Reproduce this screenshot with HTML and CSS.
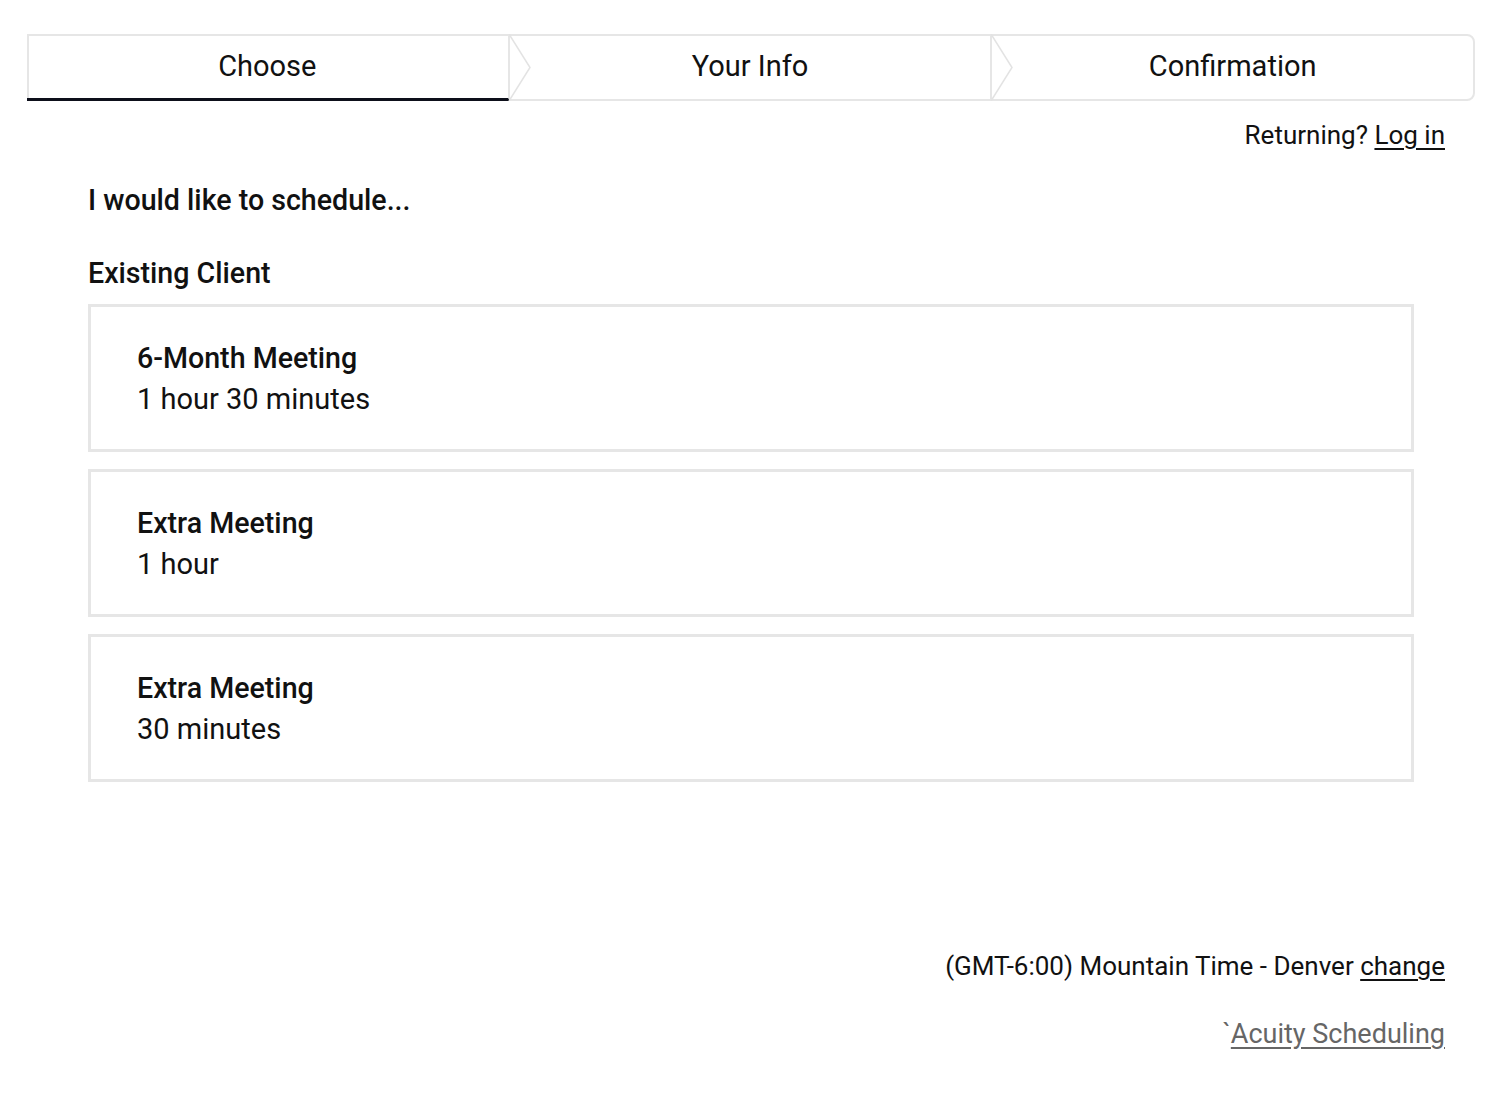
FILE: index.html
```html
<!DOCTYPE html>
<html lang="en">
<head>
<meta charset="utf-8">
<title>Schedule</title>
<link rel="stylesheet" href="styles.css">
</head>
<body>
<div class="page">
  <nav class="steps">
    <div class="step active">Choose
      <svg class="chev" viewBox="0 0 24 67" preserveAspectRatio="none"><polyline points="1,0 22,33.5 1,67" fill="none" stroke="#e3e3e3" stroke-width="1.5"/></svg>
    </div>
    <div class="step">Your Info
      <svg class="chev" viewBox="0 0 24 67" preserveAspectRatio="none"><polyline points="1,0 22,33.5 1,67" fill="none" stroke="#e3e3e3" stroke-width="1.5"/></svg>
    </div>
    <div class="step">Confirmation</div>
  </nav>

  <div class="returning">Returning? <a href="#">Log in</a></div>

  <main class="content">
    <h2 class="intro">I would like to schedule...</h2>
    <h3 class="category">Existing Client</h3>
    <div class="cards">
      <div class="card">
        <div class="card-title">6-Month Meeting</div>
        <div class="card-dur">1 hour 30 minutes</div>
      </div>
      <div class="card">
        <div class="card-title">Extra Meeting</div>
        <div class="card-dur">1 hour</div>
      </div>
      <div class="card">
        <div class="card-title">Extra Meeting</div>
        <div class="card-dur">30 minutes</div>
      </div>
    </div>
  </main>

  <footer class="footer">
    <div class="tz">(GMT-6:00) Mountain Time - Denver <a href="#">change</a></div>
    <div class="powered">`<a href="#">Acuity Scheduling</a></div>
  </footer>
</div>
</body>
</html>
```
FILE: styles.css
```css
html, body {
  margin: 0;
  padding: 0;
  background: #fff;
}
body {
  font-family: Roboto, "Liberation Sans", Arial, sans-serif;
  color: #111;
}
.page {
  padding: 34px 25px 0 27px;
}
.steps {
  display: flex;
  height: 67px;
  box-sizing: border-box;
  border: 2px solid #e6e6e6;
  border-radius: 0 8px 8px 0;
}
.step {
  position: relative;
  flex: 1;
  display: flex;
  align-items: center;
  justify-content: center;
  font-size: 29px;
  color: #111;
  border-right: 2px solid #e6e6e6;
  margin-top: -2px;
  margin-bottom: -2px;
  padding-bottom: 4px;
  box-sizing: border-box;
}
.step:first-child { margin-left: -2px; }
.step:last-child { border-right: none; }
.step.active {
  border-bottom: 3px solid #0d0f1a;
  padding-bottom: 1px;
}
.chev {
  position: absolute;
  right: -24px;
  top: 0;
  width: 24px;
  height: 67px;
}
.returning {
  text-align: right;
  font-size: 26px;
  margin-top: 17px;
  padding-right: 30px;
  line-height: 34px;
}
a {
  color: #111;
  text-decoration: underline;
  text-underline-offset: 4px;
}
.content {
  padding-left: 61px;
  width: 1326px;
}
.intro {
  font-size: 28.6px;
  font-weight: 500;
  margin: 31px 0 0;
  line-height: 34px;
}
.category {
  font-size: 28.6px;
  font-weight: 500;
  margin: 39px 0 0;
  line-height: 34px;
}
.cards {
  display: flex;
  flex-direction: column;
  gap: 17px;
  margin-top: 14px;
}
.card {
  border: 3px solid #e6e6e6;
  height: 148px;
  box-sizing: border-box;
  padding: 33px 46px 0;
}
.card-title {
  font-size: 28.6px;
  font-weight: 500;
  line-height: 36px;
}
.card-dur {
  font-size: 29px;
  line-height: 40px;
  margin-top: 3px;
}
.footer {
  text-align: right;
  padding-right: 30px;
  margin-top: 167px;
  font-size: 26px;
}
.tz { line-height: 34px; }
.powered {
  margin-top: 34px;
  color: #666;
  line-height: 34px;
  font-size: 27px;
}
.powered a { color: #666; }
```
